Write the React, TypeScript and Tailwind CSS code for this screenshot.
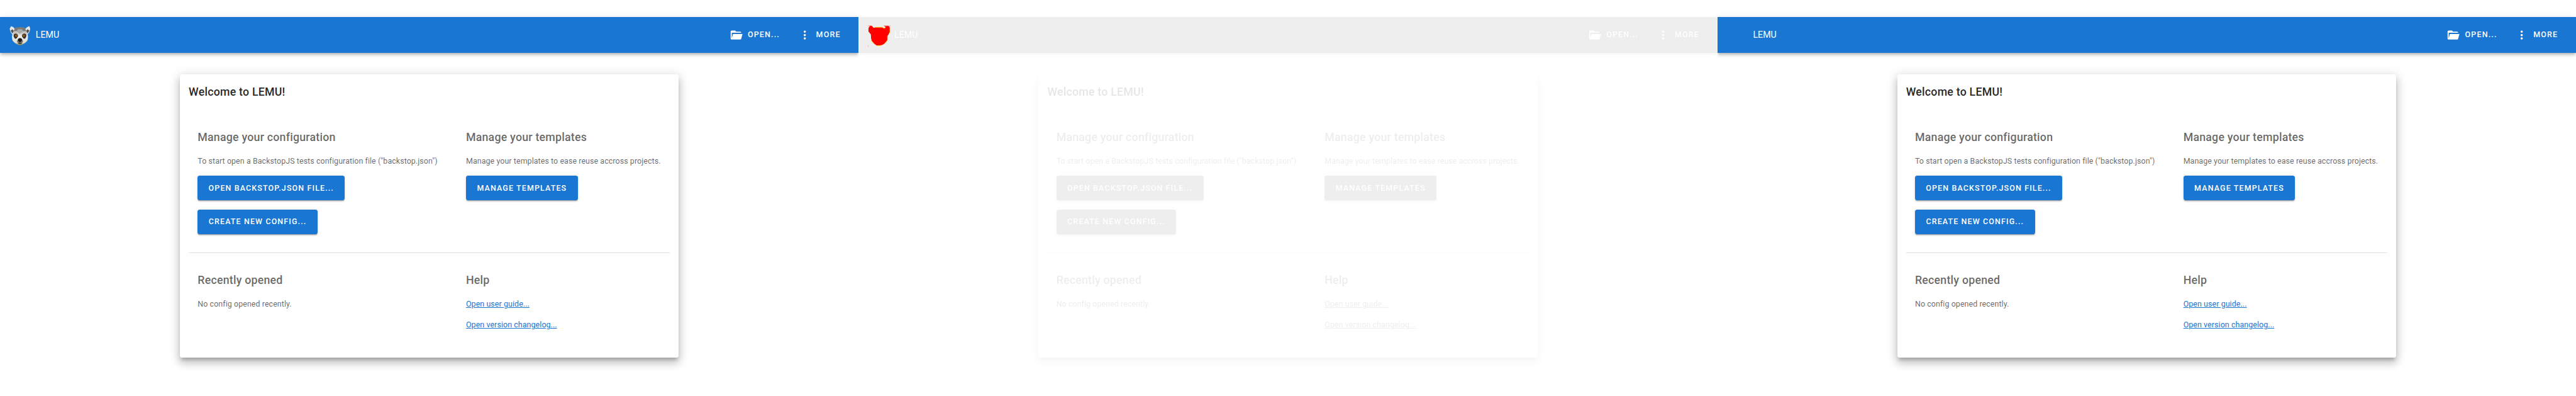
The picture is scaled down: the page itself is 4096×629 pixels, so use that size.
import type { ReactNode } from "react";

type Logo = "photo" | "mask" | "none";

function LemurFace() {
  return (
    <svg viewBox="0 0 50 50" className="h-full w-full">
      <defs>
        <linearGradient id="fur" x1="0" y1="0" x2="0" y2="1">
          <stop offset="0" stopColor="#8b8a88" />
          <stop offset="0.25" stopColor="#bdbcb8" />
          <stop offset="0.5" stopColor="#efeeea" />
          <stop offset="0.85" stopColor="#dcdccf" />
          <stop offset="1" stopColor="#66703f" />
        </linearGradient>
        <filter id="soft" x="-20%" y="-20%" width="140%" height="140%">
          <feGaussianBlur stdDeviation="0.6" />
        </filter>
      </defs>
      <g filter="url(#soft)">
        <path d="M2 11 5 5 10 7 14 12 12 20 8 24 4 18Z" fill="#e6e6e4" />
        <path d="M48 11 46 5 41 7 36 12 38 20 42 24 46 18Z" fill="#e6e6e4" />
        <path d="M4 15 8 12 12 16 9 23Z" fill="#55534f" />
        <path d="M46 15 42 12 38 16 41 23Z" fill="#55534f" />
        <path d="M15 8.5Q25 6.5 35 8.5L42 21Q44 33 41 38 34 46 25 48 16 46 9 38 6 33 8 21Z" fill="url(#fur)" />
        <path d="M14 9Q25 6 36 9L39 16Q31 14 25 20 19 14 11 16Z" fill="#7b7a79" />
        <path d="M17 16 25 22 33 16 29 12H21Z" fill="#aaa9a7" />
        <path d="M11 24Q13 20 18 22 22 25 20 29 17 34 14 33 10 29 11 24Z" fill="#37332f" />
        <path d="M39 24Q37 20 32 22 28 25 30 29 33 34 36 33 40 29 39 24Z" fill="#37332f" />
        <path d="M21 33Q25 29 29 33L32 39Q29 45 25 45 21 45 18 39Z" fill="#77746f" />
        <path d="M20.500 34Q25 31 29.500 34L29 38 25 41 21 38Z" fill="#191716" />
        <path d="M20 43Q25 41 30 43L27 45H23Z" fill="#45443b" />
      </g>
      <circle cx="16.500" cy="26.300" r="2.300" fill="#c47f22" />
      <circle cx="33.500" cy="26.300" r="2.300" fill="#c47f22" />
      <circle cx="16.500" cy="26.300" r="1" fill="#2a1a08" />
      <circle cx="33.500" cy="26.300" r="1" fill="#2a1a08" />
    </svg>
  );
}

function LemurMask() {
  return (
    <svg viewBox="0 0 50 50" className="h-full w-full overflow-visible">
      <path
        d="M1.300 9.300 3.300 6.500 5 4.700H9.500L11 7 12.300 8.600H15L15.700 7.300H32.700L34.300 9.300H38.700L39.300 7 37 5H47.700L49.300 10.300V18L47 22.500 44 26.300 43.300 37 40 41 36.700 44.700 30 47.700 26 48.700H20L13.300 43.700 8.500 38.300 7.300 34 6.700 23.500 1.300 17Z"
        fill="#ff0000"
      />
      <path
        d="M15.500 7.300H32.700L34.300 9.300H38.500M49.300 10.300V18L47 22.500M44 27V33M43.300 37 36.700 44.700M30 47.700 26 48.700H20M13.300 43.700 8.500 38.300 7.300 34"
        fill="none"
        stroke="#ffff00"
        strokeWidth="1"
      />
      <path d="M0 4H1V5H0ZM3 4H8V5H3ZM36 4H40V5H36ZM41 4H46V5H41ZM48.500 4H50V5H48.500ZM0 49H1V50H0Z" fill="#ff0000" />
    </svg>
  );
}

function FolderOpen() {
  return (
    <svg viewBox="0 0 24 24" className="h-[21.33px] w-[21.33px] shrink-0" fill="currentColor">
      <path d="M19,20H4C2.89,20 2,19.1 2,18V6C2,4.89 2.89,4 4,4H10L12,6H19A2,2 0 0,1 21,8H21L4,8V18L6.14,10H23.21L20.93,18.5C20.7,19.37 19.92,20 19,20Z" />
    </svg>
  );
}

function DotsVertical() {
  return (
    <svg viewBox="0 0 24 24" className="h-[21.33px] w-[21.33px] shrink-0" fill="currentColor">
      <path d="M12,16A2,2 0 0,1 14,18A2,2 0 0,1 12,20A2,2 0 0,1 10,18A2,2 0 0,1 12,16M12,10A2,2 0 0,1 14,12A2,2 0 0,1 12,14A2,2 0 0,1 10,12A2,2 0 0,1 12,10M12,4A2,2 0 0,1 14,6A2,2 0 0,1 12,8A2,2 0 0,1 10,6A2,2 0 0,1 12,4Z" />
    </svg>
  );
}

function AppBar({ logo }: { logo: Logo }) {
  return (
    <header className="flex h-[56.89px] items-center bg-[#1976d2] pl-[14.22px] text-white shadow-[0_1.8px_3.6px_-0.9px_rgba(0,0,0,0.2),0_3.6px_4.4px_0_rgba(0,0,0,0.14),0_0.9px_8.9px_0_rgba(0,0,0,0.12)]">
      <div className="h-[35.56px] w-[35.56px]">{logo === "photo" && <LemurFace />}</div>
      <span className="ml-[7px] text-[14.22px] leading-5">LEMU</span>
      <nav className="ml-auto flex text-[12.44px] font-medium tracking-[0.096em]">
        <button className="flex w-[109.1px] items-center gap-[8px]">
          <FolderOpen />
          OPEN...
        </button>
        <button className="flex w-[96.7px] items-center gap-[7.6px]">
          <DotsVertical />
          MORE
        </button>
      </nav>
    </header>
  );
}

function Heading({ children }: { children: ReactNode }) {
  return (
    <h2 className="mt-[28.7px] text-[17.78px] leading-7 font-medium tracking-[0.0125em] text-black/60">{children}</h2>
  );
}

function ActionButton({ width, children }: { width: string; children: ReactNode }) {
  return (
    <button
      className={`${width} h-[39.11px] rounded-[3.5px] bg-[#1976d2] text-center text-[12.44px] font-medium tracking-[0.092em] text-white shadow-[0_2.7px_0.9px_-1.8px_rgba(0,0,0,0.2),0_1.8px_1.8px_0_rgba(0,0,0,0.14),0_0.9px_4.4px_0_rgba(0,0,0,0.12)]`}
    >
      {children}
    </button>
  );
}

function WelcomeCard() {
  return (
    <section className="mx-auto mt-[34.1px] h-[450px] w-[793.6px] rounded-[3.5px] bg-white px-[14.22px] whitespace-nowrap shadow-[0_5.3px_5.3px_-2.7px_rgba(0,0,0,0.2),0_8.9px_12.4px_0.9px_rgba(0,0,0,0.14),0_3.6px_16px_2.7px_rgba(0,0,0,0.12)]">
      <h1 className="text-[17.78px] leading-[56.9px] font-medium tracking-[0.0125em] text-black/87">Welcome to LEMU!</h1>
      <div className="grid h-[226.3px] grid-cols-[426.67px_1fr] items-start pl-[14.22px] text-[12.44px] leading-5 tracking-[0.006em] text-black/60">
        <div>
          <Heading>Manage your configuration</Heading>
          <p className="mt-[14.4px]">To start open a BackstopJS tests configuration file ("backstop.json")</p>
          <div className="mt-[13.4px] flex flex-col items-start gap-[14.3px]">
            <ActionButton width="w-[234px]">OPEN BACKSTOP.JSON FILE...</ActionButton>
            <ActionButton width="w-[190.6px]">CREATE NEW CONFIG...</ActionButton>
          </div>
        </div>
        <div>
          <Heading>Manage your templates</Heading>
          <p className="mt-[14.4px]">Manage your templates to ease reuse accross projects.</p>
          <div className="mt-[13.4px] flex">
            <ActionButton width="w-[177.8px]">MANAGE TEMPLATES</ActionButton>
          </div>
        </div>
      </div>
      <hr className="border-t border-black/12" />
      <div className="grid grid-cols-[426.67px_1fr] items-start pl-[14.22px] text-[12.44px] leading-5 tracking-[0.006em] text-black/60">
        <div>
          <Heading>Recently opened</Heading>
          <p className="mt-[14px]">No config opened recently.</p>
        </div>
        <div className="flex flex-col items-start">
          <Heading>Help</Heading>
          <a className="mt-[14px] text-[#1976d2] underline">Open user guide...</a>
          <a className="mt-[13.3px] text-[#1976d2] underline">Open version changelog...</a>
        </div>
      </div>
    </section>
  );
}

function Page({ logo }: { logo: Logo }) {
  const faded = logo === "mask";
  return (
    <div className="relative h-[629px] overflow-hidden bg-white">
      <div className={`h-full pt-[27px] ${faded ? "opacity-11 grayscale" : ""}`}>
        <AppBar logo={logo} />
        <WelcomeCard />
      </div>
      {faded && (
        <div className="absolute top-[37.67px] left-[14.22px] h-[35.56px] w-[35.56px]">
          <LemurMask />
        </div>
      )}
    </div>
  );
}

export default function App() {
  return (
    <main className="grid w-[4096px] grid-cols-3 bg-white font-[Roboto,sans-serif]">
      <Page logo="photo" />
      <Page logo="mask" />
      <Page logo="none" />
    </main>
  );
}
